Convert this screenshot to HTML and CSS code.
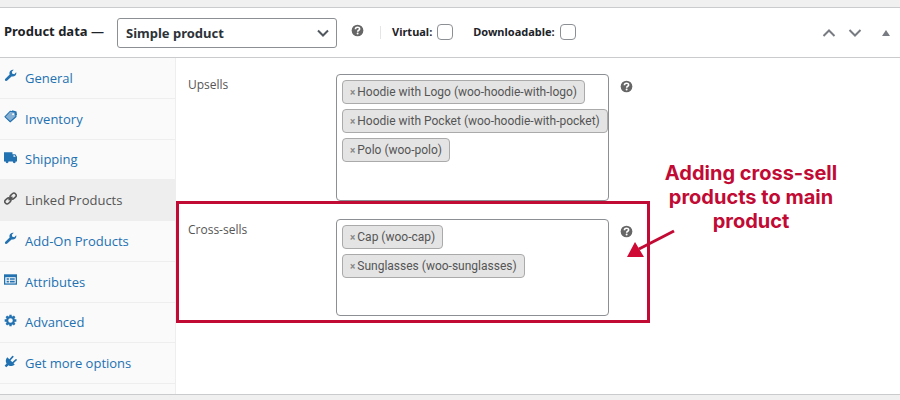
FILE: index.html
```html
<!DOCTYPE html>
<html lang="en">
  <head>
    <title>Product data</title>
    <meta charset="UTF-8" />
    <meta name="viewport" content="width=device-width, initial-scale=1.0" />
    <link rel="stylesheet" href="styles.css">
  </head>
  <body>
    <!-- Shared icons -->
    <svg class="sprite" aria-hidden="true">
      <symbol id="icon-wrench" viewBox="0 0 20 20">
        <path d="M17.500 10c-1.800 1.800-4 2-5.900 1.400L5 17.800c-.8.8-2 .9-2.900.1-.9-.9-.9-2.200 0-3L8.700 8.500C8 6.500 8.400 4.200 10 2.600 11.400 1.200 13.300.8 15 1.200L12 4.300l.8 3 3 .8 3-3c.4 1.700 0 3.600-1.300 4.900z" />
      </symbol>
      <symbol id="icon-help" viewBox="0 0 20 20">
        <circle cx="10" cy="10" r="9" />
        <path fill="none" stroke="#fff" stroke-width="2.400" d="M6.800 8c0-4 6.500-4 6.500-.5 0 2.300-3.100 2-3.100 4.600" />
        <circle cx="10.200" cy="14.600" r="1.500" fill="#fff" />
      </symbol>
    </svg>

    <div class="postbox">
      <div class="postbox-header">
        <h2>Product data —</h2>
        <div class="select-wrap">
          <select class="product-type" aria-label="Product type">
            <option>Simple product</option>
          </select>
          <svg class="chevron" viewBox="0 0 12 8"><path d="M1 1.500l5 5 5-5" /></svg>
        </div>
        <svg class="help"><use href="#icon-help" /></svg>
        <div class="type-options">
          <label class="check">Virtual: <input type="checkbox" /></label>
          <label class="check">Downloadable: <input type="checkbox" /></label>
        </div>
        <div class="handle-actions">
          <button type="button" aria-label="Move up">
            <svg class="arrow" viewBox="0 0 14 10"><path d="M1.500 8L7 2.500 12.500 8" /></svg>
          </button>
          <button type="button" aria-label="Move down">
            <svg class="arrow" viewBox="0 0 14 10"><path d="M1.500 2L7 7.500 12.500 2" /></svg>
          </button>
          <button type="button" aria-label="Toggle panel">
            <svg class="toggle" viewBox="0 0 8 6"><path d="M4 0l4 6H0z" /></svg>
          </button>
        </div>
      </div>

      <div class="panel-wrap">
        <ul class="tabs">
          <li><a href="#general"><svg><use href="#icon-wrench" /></svg>General</a></li>
          <li>
            <a href="#inventory">
              <svg viewBox="0 0 20 20">
                <path opacity=".55" d="M10.500 2.500L18 4l.8 7-9 8L1.500 11z" />
                <path fill="none" stroke="currentColor" stroke-width="1.600" d="M9.500 2l7.500 1.500L18.500 10l-9 8L1.500 10.500zM12.500 1l6 2 .8 5" />
                <circle cx="14" cy="6.500" r="1.500" fill="#fafafa" />
              </svg>Inventory</a>
          </li>
          <li>
            <a href="#shipping">
              <svg viewBox="0 0 20 20">
                <path d="M0 2h13v3h4.500L20 9v7H0z" />
                <circle cx="4.700" cy="16.500" r="2.200" /><circle cx="15.800" cy="16.500" r="2.200" />
                <path fill="#fafafa" d="M14.500 6.500h1.800L18 9h-3.500z" />
              </svg>Shipping</a>
          </li>
          <li class="active">
            <a href="#linked">
              <svg viewBox="0 0 20 20">
                <g fill="none" stroke="currentColor" stroke-width="2.400" transform="rotate(-42 10 10)">
                  <rect x="-.5" y="6.500" width="10" height="7" rx="3.500" />
                  <rect x="10.500" y="6.500" width="10" height="7" rx="3.500" />
                  <path d="M6 10h8" />
                </g>
              </svg>Linked Products</a>
          </li>
          <li><a href="#addons"><svg><use href="#icon-wrench" /></svg>Add-On Products</a></li>
          <li>
            <a href="#attributes">
              <svg viewBox="0 0 20 20">
                <path d="M0 2h20v16H0z" />
                <path fill="#fafafa" d="M2 6.500h16V16H2z" />
                <path d="M4 8h3.500v2.500H4zM9 8h7.500v2.500H9zM4 12h3.500v2.500H4zM9 12h7.500v2.500H9z" />
              </svg>Attributes</a>
          </li>
          <li>
            <a href="#advanced">
              <svg viewBox="0 0 20 20">
                <g fill="none" stroke="currentColor">
                  <circle cx="10" cy="10" r="5.200" stroke-width="3.400" />
                  <path stroke-width="3.600" d="M10 1v3M10 16v3M1 10h3M16 10h3M3.600 3.600l2.200 2.200M14.200 14.200l2.200 2.200M3.600 16.400l2.200-2.200M14.200 5.800l2.200-2.200" />
                </g>
              </svg>Advanced</a>
          </li>
          <li>
            <a href="#more">
              <svg viewBox="0 0 20 20">
                <path d="M5 3.500l11.500 11.300c-2.700 2.700-6.800 3-9.500 1L3.500 19 1 16.500l3-3.300C2 10 2.500 6.200 5 3.500z" />
                <path fill="none" stroke="currentColor" stroke-width="2.400" stroke-linecap="round" d="M8.500 8l5-5.500M13 12.500l5.500-5" />
              </svg>Get more options</a>
          </li>
        </ul>

        <div class="panel">
          <div class="field">
            <span class="field-label" id="upsells">Upsells</span>
            <ul class="choices choices-tall" aria-labelledby="upsells">
              <li><button type="button" aria-label="Remove">×</button>Hoodie with Logo (woo-hoodie-with-logo)</li>
              <li><button type="button" aria-label="Remove">×</button>Hoodie with Pocket (woo-hoodie-with-pocket)</li>
              <li><button type="button" aria-label="Remove">×</button>Polo (woo-polo)</li>
            </ul>
            <svg class="help"><use href="#icon-help" /></svg>
          </div>
          <div class="field">
            <span class="field-label" id="crosssells">Cross-sells</span>
            <ul class="choices" aria-labelledby="crosssells">
              <li><button type="button" aria-label="Remove">×</button>Cap (woo-cap)</li>
              <li><button type="button" aria-label="Remove">×</button>Sunglasses (woo-sunglasses)</li>
            </ul>
            <svg class="help"><use href="#icon-help" /></svg>

            <!-- Annotation over the cross-sells row -->
            <div class="highlight"></div>
            <svg class="pointer" viewBox="0 0 48 32">
              <path class="pointer-line" d="M47 2L12 20" />
              <path d="M0 28L8 13l9 15z" />
            </svg>
            <p class="callout">Adding cross-sell products to main product</p>
          </div>
        </div>
      </div>
    </div>
  </body>
</html>
```

FILE: styles.css
```css
* {
  margin: 0;
  padding: 0;
  box-sizing: border-box;
}

body {
  min-height: 100vh;
  padding: 7px 0 5px;
  display: flex;
  background: #f0f0f1;
  color: #555;
  font-family: "Open Sans", "Noto Sans", sans-serif;
  font-size: 12px;
}

ul {
  list-style: none;
}

button {
  border: 0;
  background: none;
  color: inherit;
  font: inherit;
  cursor: pointer;
}

.sprite {
  position: absolute;
  width: 0;
  height: 0;
}

.postbox {
  flex: 1;
  display: flex;
  flex-direction: column;
  background: #fff;
  border: solid #c9cbcd;
  border-width: 1px 0;
}

/* Header */
.postbox-header {
  height: 50px;
  padding: 0 10px 0 4px;
  display: flex;
  align-items: center;
  border-bottom: 1px solid #c9cbcd;
  color: #1d2327;
  font-family: "Noto Sans", "Open Sans", sans-serif;
}

.postbox-header h2 {
  width: 113px;
  padding-bottom: 4px;
  font-size: 13px;
  white-space: nowrap;
}

.select-wrap {
  position: relative;
  width: 220px;
}

.product-type {
  width: 100%;
  height: 30px;
  padding: 0 24px 0 8px;
  appearance: none;
  border: 1px solid #8c8f94;
  border-radius: 3px;
  background: #fff;
  color: #2c3338;
  font: bold 13px "Noto Sans", "Open Sans", sans-serif;
}

.chevron {
  position: absolute;
  top: 11px;
  right: 8px;
  width: 12px;
  height: 8px;
  fill: none;
  stroke: #50575e;
  stroke-width: 2;
  pointer-events: none;
}

.help {
  width: 13px;
  height: 13px;
  fill: #666;
}

.postbox-header .help {
  margin: 0 0 4px 14px;
}

.type-options {
  margin-left: 16px;
  padding: 0 0 2px 12px;
  display: flex;
  align-items: center;
  gap: 20px;
  background: linear-gradient(#e5e5e5, #e5e5e5) 0 50% / 1px 13px no-repeat;
}

.check {
  display: flex;
  align-items: center;
  gap: 5px;
  font-size: 11px;
  font-weight: bold;
}

.check input {
  width: 16px;
  height: 16px;
  appearance: none;
  border: 1px solid #8c8f94;
  border-radius: 4px;
  background: #fff;
}

.handle-actions {
  margin-left: auto;
  display: flex;
  align-items: center;
  gap: 12px;
  color: #787c82;
}

.handle-actions button {
  display: flex;
}

.handle-actions button:last-child {
  margin-left: 8px;
}

.arrow {
  width: 14px;
  height: 10px;
  fill: none;
  stroke: currentColor;
  stroke-width: 2;
}

.toggle {
  width: 8px;
  height: 6px;
  fill: currentColor;
}

/* Tabs */
.panel-wrap {
  flex: 1;
  display: flex;
}

.tabs {
  width: 176px;
  padding-bottom: 10px;
  flex-shrink: 0;
  display: flex;
  flex-direction: column;
  background: #fafafa;
  border-right: 1px solid #eee;
}

.tabs li {
  flex: 1;
  display: flex;
  border-bottom: 1px solid #eee;
}

.tabs a {
  flex: 1;
  padding: 0 4px;
  display: flex;
  align-items: center;
  gap: 8px;
  color: #2271b1;
  font-size: 13px;
  line-height: 20px;
  text-decoration: none;
}

.tabs svg {
  width: 13px;
  height: 13px;
  margin-bottom: 4px;
  fill: currentColor;
}

.tabs .active a {
  background: #eee;
  color: #555;
}

/* Linked products panel */
.panel {
  flex: 1;
  min-width: 0;
  padding: 16px 12px;
}

.field {
  position: relative;
  display: grid;
  grid-template-columns: 137px minmax(0, 273px) 13px;
  column-gap: 11px;
  align-items: start;
}

.field + .field {
  margin-top: 18px;
}

.field-label {
  padding-top: 3px;
  line-height: 16px;
}

.field > .help {
  margin-top: 6px;
}

.choices {
  min-height: 97px;
  padding: 5px;
  display: flex;
  flex-direction: column;
  align-items: flex-start;
  gap: 5px;
  overflow: hidden;
  border: 1px solid #8c8f94;
  border-radius: 4px;
  font-family: Roboto, "Open Sans", sans-serif;
}

.choices-tall {
  min-height: 127px;
}

.choices li {
  height: 24px;
  padding: 0 7px;
  display: flex;
  align-items: center;
  gap: 2px;
  background: #e4e4e4;
  border: 1px solid #aaa;
  border-radius: 4px;
  white-space: nowrap;
}

.choices button {
  color: #888;
  font-size: 10px;
  font-weight: bold;
}

/* Annotation */
.highlight {
  position: absolute;
  top: -18px;
  left: -12px;
  width: 474px;
  height: 122px;
  border: 3px solid #c10a34;
  pointer-events: none;
}

.pointer {
  position: absolute;
  top: 10px;
  left: 439px;
  width: 48px;
  height: 32px;
  fill: #cf0a35;
}

.pointer-line {
  stroke: #c10a34;
  stroke-width: 3;
}

.callout {
  position: absolute;
  top: -58px;
  left: 463px;
  width: 200px;
  color: #c10a34;
  font: bold 20px/24px Inter, sans-serif;
  text-align: center;
}
```
